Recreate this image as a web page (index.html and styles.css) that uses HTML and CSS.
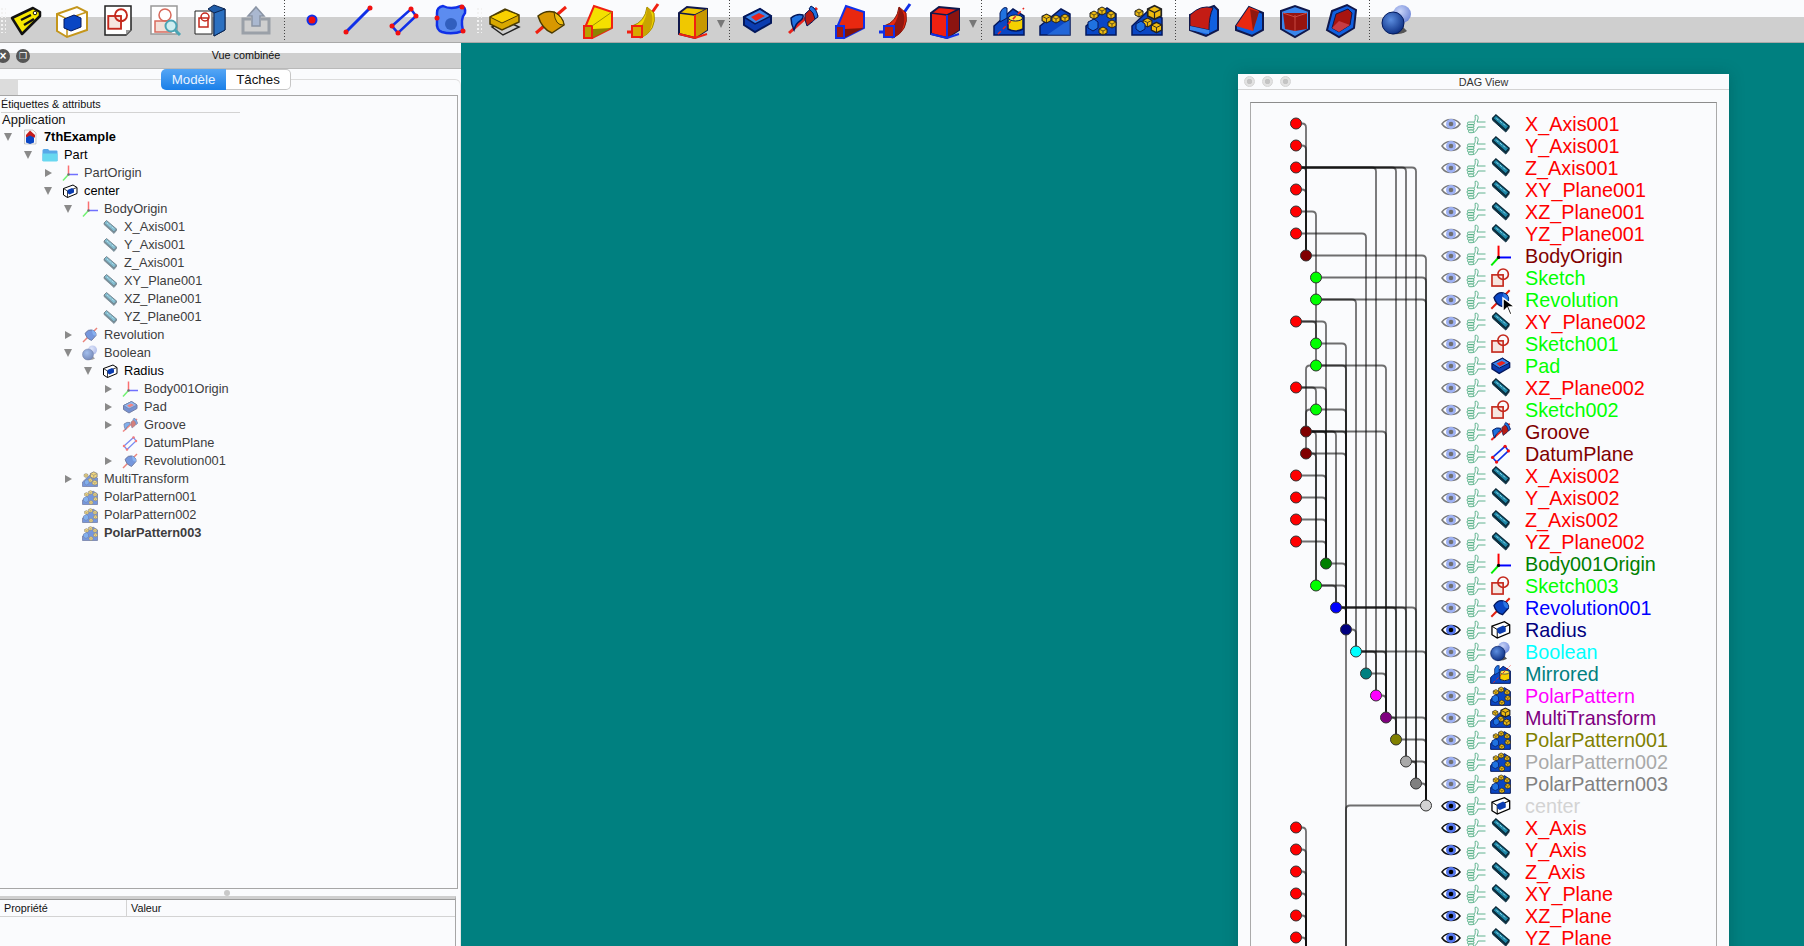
FILE: index.html
```html
<!DOCTYPE html>
<html lang="fr">

<head>
    <meta charset="UTF-8">
    <title>FreeCAD - DAG View</title>
    <link rel="stylesheet" href="styles.css">
</head>

<body>

    <!-- icons, used everywhere below -->
    <svg class="defs">
        <defs>
            <radialGradient id="ball" cx="40%" cy="35%" r="70%"><stop offset="0" stop-color="#5c8ee0"/><stop offset="1" stop-color="#0a2c80"/></radialGradient>
            <radialGradient id="ballb" cx="40%" cy="35%" r="70%"><stop offset="0" stop-color="#c8d4f8"/><stop offset="1" stop-color="#6f86d8"/></radialGradient>
            <symbol id="eye" viewBox="0 0 20 14"><path d="M1 7C5 1 15 1 19 7C15 13 5 13 1 7Z" fill="#fff" stroke="#111" stroke-width="1.5"/><circle cx="10" cy="7" r="5" fill="#5577ee"/><circle cx="10" cy="7" r="2.3" fill="#000"/></symbol>
            <symbol id="thumb" viewBox="0 0 20 20"><g fill="#eef8f2" stroke="#3aa274" stroke-width=".8"><path d="M8 8C10 6 9 3 9 1.5c2.500-1 3.500 1 3 3.500l-1 3h8.500" fill="none"/><path d="M19.500 13H12C11 16 9 18.500 7 18.500" fill="none"/><rect x="1.500" y="8" width="7" height="2.700" rx="1.300"/><rect x="1" y="10.700" width="7" height="2.700" rx="1.300"/><rect x="1.500" y="13.400" width="6.500" height="2.700" rx="1.300"/><rect x="2.500" y="16" width="5" height="2.700" rx="1.300"/></g></symbol>
            <symbol id="axis" viewBox="0 0 32 32"><path d="M4 8v3l20 18 5-6v-3z" fill="#0c3c50" stroke="#0b2a3a" stroke-width="1.500"/><path d="M4 8 9 3 29 20 24 26Z" fill="#1f88a8" stroke="#0b2a3a" stroke-width="2"/><path d="M10 8l3 3M15 12l3 3M20 16l3 3" stroke="#9fd8e8" stroke-width="1.500"/></symbol>
            <symbol id="origin" viewBox="0 0 32 32"><path d="M13 19V1" stroke="#f00" stroke-width="3"/><path d="M13 19H32" stroke="#00f" stroke-width="3"/><path d="M13 19 2 31" stroke="#0e0" stroke-width="3"/><circle cx="13" cy="19" r="2.500"/></symbol>
            <symbol id="sk" viewBox="0 0 32 32"><rect x="3" y="12" width="17" height="17" fill="#f6e6e0" stroke="#c4281c" stroke-width="2.500"/><circle cx="20" cy="11" r="8" fill="none" stroke="#c4281c" stroke-width="2.500"/></symbol>
            <symbol id="revb" viewBox="0 0 32 32"><path d="M2 30 30 2" stroke="#e02010" stroke-width="3"/><path d="M6 13Q12 4 20 6Q29 9 28 17L19 27Q9 24 6 13Z" fill="#0a46c4" stroke="#04185c" stroke-width="2"/><path d="M20 6Q29 9 28 17Q20 18 20 6Z" fill="#2c78e8"/></symbol>
            <symbol id="padb" viewBox="0 0 32 32"><path d="M3 13 19 5 30 12V19L14 28 3 21Z" fill="#0a3cb0" stroke="#04185c" stroke-width="2"/><path d="M3 13 19 5 30 12 14 20Z" fill="#3a86ec" stroke="#04185c" stroke-width="1.500"/><path d="M10 13 18 9 24 12 15 17Z" fill="#e8241c"/></symbol>
            <symbol id="groove" viewBox="0 0 32 32"><path d="M2 29 30 4" stroke="#e8241c" stroke-width="3"/><path d="M18 10Q22 6 26 3L31 12Q26 18 20 22Q17 15 18 10Z" fill="#b81c14" stroke="#04185c"/><path d="M4 14Q10 9 16 11Q17 14 13 17Q9 19 7 26Q4 20 4 14Z" fill="#1f72e0" stroke="#04185c" stroke-width="1.500"/><path d="M24 2Q30 5 31 13L28 15Q27 8 22 5Z" fill="#1f72e0" stroke="#04185c"/></symbol>
            <symbol id="plane" viewBox="0 0 32 32"><path d="M4 22 23 5 28 12 10 29Z" fill="none" stroke="#1030e8" stroke-width="2.500"/><g fill="#f01010"><circle cx="4" cy="22" r="2.500"/><circle cx="23" cy="5" r="2.500"/><circle cx="28" cy="12" r="2.500"/><circle cx="10" cy="29" r="2.500"/></g></symbol>
            <symbol id="body" viewBox="0 0 32 32"><path d="M3 11 22 4 30 9V21L11 29 3 24Z" fill="#fff" stroke="#000" stroke-width="2"/><path d="M3 11 11 16 30 9M11 16V29" fill="none" stroke="#000" stroke-width="1.500"/><path d="M11 14 20 10 24 13V19L15 23 11 20Z" fill="#0a3cb0"/></symbol>
            <symbol id="bool" viewBox="0 0 32 32"><circle cx="21" cy="10" r="9" fill="url(#ballb)"/><path d="M10 30Q20 31 26 27L20 21Z" fill="#555"/><circle cx="12" cy="19" r="11" fill="url(#ball)" stroke="#041c60"/></symbol>
            <symbol id="mirror" viewBox="0 0 32 32"><path d="M1 31V22L20 5 31 12V31Z" fill="#0a46c4" stroke="#04185c" stroke-width="1.500"/><path d="M7 18V9Q10 2 14 4V14Z" fill="#1f72e0" stroke="#04185c"/><path d="M15 14Q22 10 30 14V25Q22 29 15 25Z" fill="#f5d000" stroke="#04185c" stroke-width="1.500"/><ellipse cx="22.500" cy="14" rx="7" ry="3" fill="#ffe84a" stroke="#04185c"/><path d="M5 30 31 4" stroke="#e8241c" stroke-width="1.500" stroke-dasharray="4 3"/></symbol>
            <symbol id="cube" viewBox="0 0 10 10"><path d="M1 3 5 1 9 3V7L5 9 1 7Z" fill="#eebb10" stroke="#222"/><path d="M1 3 5 5 9 3M5 5V9" fill="none" stroke="#222" stroke-width=".7"/></symbol>
            <symbol id="linear" viewBox="0 0 32 32"><path d="M1 31V22L22 5 31 10V31Z" fill="#0a46c4" stroke="#04185c" stroke-width="1.500"/><path d="M8 31 31 15V31Z" fill="#3a86ec" opacity=".5"/><use href="#cube" x="2" y="9" width="11" height="11"/><use href="#cube" x="12" y="10" width="10" height="10"/><use href="#cube" x="21" y="9" width="10" height="10"/></symbol>
            <symbol id="polar" viewBox="0 0 32 32"><path d="M1 31V22L22 4 31 10V31Z" fill="#0a46c4" stroke="#04185c" stroke-width="1.500"/><use href="#cube" x="4" y="6" width="10" height="10"/><use href="#cube" x="12" y="2" width="10" height="10"/><use href="#cube" x="21" y="6" width="10" height="10"/><use href="#cube" x="22" y="15" width="10" height="10"/><use href="#cube" x="13" y="22" width="10" height="10"/><path d="M3 18 9 15 13 18V24L8 27 3 24Z" fill="#1f72e0" stroke="#04185c"/></symbol>
            <symbol id="multi" viewBox="0 0 32 32"><path d="M1 31V22L18 6 31 14V31Z" fill="#0a46c4" stroke="#04185c" stroke-width="1.500"/><use href="#cube" x="3" y="4" width="10" height="10"/><use href="#cube" x="15" y="0" width="17" height="17"/><use href="#cube" x="11" y="13" width="11" height="11"/><use href="#cube" x="19" y="17" width="13" height="13"/><path d="M5 20 10 17 14 20V25L9 28 5 25Z" fill="#1f72e0" stroke="#04185c"/></symbol>
            <symbol id="doc" viewBox="0 0 32 32"><path d="M5 2H22L28 8V30H5Z" fill="#f8f8f8" stroke="#999"/><path d="M16 3 26 12V17H8V12Z" fill="#c41c1c"/><path d="M8 17 16 13 24 17V27L16 30 8 27Z" fill="#0a46c4"/></symbol>
            <symbol id="folder" viewBox="0 0 32 32"><path d="M1 7Q1 4 4 4H12L15 7H29Q31 7 31 9V28H1Z" fill="#58a8e8"/><path d="M1 13H31V27Q31 29 29 29H3Q1 29 1 27Z" fill="#68d8f0"/></symbol>
            <symbol id="t-tag" viewBox="0 0 32 32"><path d="M2 14 23 4 30 8V12L12 30Z" fill="#f7e800" stroke="#111" stroke-width="2.500" stroke-linejoin="round"/><path d="M11 16 21 11M14 21 24 15" stroke="#111" stroke-width="2.500"/><circle cx="25" cy="9" r="1.800" fill="#fff" stroke="#111"/></symbol>
            <symbol id="t-part" viewBox="0 0 32 32"><path d="M1 10 21 3 31 8V26L11 33 1 27Z" fill="#fff" stroke="#c4961c" stroke-width="2"/><path d="M1 10 11 15 31 8M11 15V33" fill="none" stroke="#c4961c" stroke-width="1.500"/><path d="M8 15 18 11 25 14V23L15 27 8 24Z" fill="#0a46c4" stroke="#04185c"/></symbol>
            <symbol id="t-sketch" viewBox="0 0 32 32"><path d="M3 2H29V26L24 31H3Z" fill="#fff" stroke="#222" stroke-width="1.500"/><path d="M24 31V26H29Z" fill="#999"/><use href="#sk" x="4" y="3" width="24" height="24"/></symbol>
            <symbol id="t-edit" viewBox="0 0 32 32"><path d="M3 2H29V30H3Z" fill="#fff" stroke="#999" stroke-width="1.500"/><rect x="7" y="17" width="16" height="11" fill="#f2e0d8" stroke="#d86a5c" stroke-width="1.500"/><circle cx="17" cy="11" r="6" fill="none" stroke="#d86a5c" stroke-width="1.500"/><circle cx="23" cy="22" r="5.500" fill="#cfeef0" stroke="#4aa4b4" stroke-width="2"/><path d="M27 26 32 31" stroke="#4aa4b4" stroke-width="3"/></symbol>
            <symbol id="t-map" viewBox="0 0 32 32"><path d="M1 7H18V30H1Z" fill="#fff" stroke="#222"/><rect x="5" y="14" width="9" height="9" fill="none" stroke="#c4281c" stroke-width="1.500"/><circle cx="11" cy="13" r="4" fill="none" stroke="#c4281c" stroke-width="1.500"/><path d="M14 5 20 1 31 5V26L20 32V9Z" fill="#1f5ca8" stroke="#0a2450"/><path d="M20 9V32L31 26V5Z" fill="#2c70c0" stroke="#0a2450"/></symbol>
            <symbol id="t-export" viewBox="0 0 32 32"><path d="M11 15H3V29H29V15H21" fill="none" stroke="#9aa0a8" stroke-width="3"/><path d="M16 3 24 12H20V22H12V12H8Z" fill="#aab8d0" stroke="#8a94a4" stroke-width="1.500"/></symbol>
            <symbol id="t-point" viewBox="0 0 32 32"><circle cx="16" cy="16" r="4.500" fill="#f01010" stroke="#1030e8" stroke-width="2"/></symbol>
            <symbol id="t-line" viewBox="0 0 32 32"><path d="M4 28 28 4" stroke="#1030e8" stroke-width="3"/><circle cx="4" cy="28" r="2.500" fill="#f01010"/><circle cx="28" cy="4" r="2.500" fill="#f01010"/></symbol>
            <symbol id="t-shape" viewBox="0 0 32 32"><path d="M3 9Q3 3 9 2Q17 6 27 2Q32 3 31 9Q26 15 29 27Q18 31 8 28Q2 26 3 18Z" fill="#5c8cf0" stroke="#1030e8" stroke-width="2.500"/><circle cx="17" cy="20" r="6" fill="#1f4ca8" opacity=".7"/><g fill="#f01010"><circle cx="3" cy="14" r="2.500"/><circle cx="28" cy="3" r="2.500"/><circle cx="29" cy="27" r="2.500"/></g></symbol>
            <symbol id="t-pad" viewBox="0 0 32 32"><path d="M3 23 17 17 30 23 14 31Z" fill="none" stroke="#222" stroke-width="1.500"/><path d="M1 13V20L13 26 30 18V11L16 5Z" fill="#d8a800" stroke="#4a3a00" stroke-width="1.500"/><path d="M1 13 17 6 30 11 13 19Z" fill="#f8d000" stroke="#4a3a00"/></symbol>
            <symbol id="t-rev" viewBox="0 0 32 32"><path d="M1 29 31 3" stroke="#f02010" stroke-width="3"/><path d="M3 12Q10 6 19 8Q28 13 29 21L17 29Q7 25 3 12Z" fill="#d89800" stroke="#4a3a00" stroke-width="1.500"/><path d="M19 8Q28 13 29 21Q20 22 19 8Z" fill="#f0c010" stroke="#4a3a00"/></symbol>
            <symbol id="t-loft" viewBox="0 0 32 32"><path d="M3 26 13 2 31 8V24L11 34Z" fill="#f4e000" stroke="#f02010" stroke-width="2"/><path d="M12 25 31 24 11 34Z" fill="#8c8400"/><path d="M3 22H11V34H3Z" fill="#b8a000" stroke="#f02010" stroke-width="2"/><path d="M11 22 31 8" stroke="#a09000"/></symbol>
            <symbol id="t-pipe" viewBox="0 0 32 32"><path d="M31 0 24 10" stroke="#f02010" stroke-width="3"/><path d="M5 22Q18 18 20 3L27 9Q30 26 14 34L5 32Z" fill="#f4d800" stroke="#a08800"/><path d="M14 22Q20 14 20 3 30 12 22 28 18 32 14 34Z" fill="#c8a400"/><path d="M5 22H15V33H5Z" fill="#d8a800" stroke="#f02010" stroke-width="2"/><path d="M0 28H5" stroke="#f02010" stroke-width="3"/></symbol>
            <symbol id="t-box" viewBox="0 0 32 32"><path d="M2 9 10 3 30 5V26L18 34 2 30Z" fill="#f0c800" stroke="#10184c" stroke-width="2"/><path d="M2 9 18 11V34M18 11 30 5" fill="none" stroke="#10184c" stroke-width="1.500"/><path d="M18 11 30 5V26L18 34Z" fill="#c89800"/><path d="M2 30 18 34 30 30" fill="none" stroke="#f02010" stroke-width="2"/><path d="M18 11V34" stroke="#f02010" stroke-width="2"/></symbol>
            <symbol id="t-loftr" viewBox="0 0 32 32"><path d="M3 26 13 2 31 8V24L11 34Z" fill="#e82810" stroke="#1030e8" stroke-width="2"/><path d="M12 25 31 24 11 34Z" fill="#801408"/><path d="M3 22H11V34H3Z" fill="#a01c10" stroke="#1030e8" stroke-width="2"/></symbol>
            <symbol id="t-piper" viewBox="0 0 32 32"><path d="M31 0 24 10" stroke="#1030e8" stroke-width="3"/><path d="M5 22Q18 18 20 3L27 9Q30 26 14 34L5 32Z" fill="#e82810" stroke="#801408"/><path d="M14 22Q20 14 20 3 30 12 22 28 18 32 14 34Z" fill="#901810"/><path d="M5 22H15V33H5Z" fill="#b82010" stroke="#1030e8" stroke-width="2"/><path d="M0 28H5" stroke="#1030e8" stroke-width="3"/></symbol>
            <symbol id="t-boxr" viewBox="0 0 32 32"><path d="M2 9 10 3 30 5V26L18 34 2 30Z" fill="#f02010" stroke="#10184c" stroke-width="2"/><path d="M18 11 30 5V26L18 34Z" fill="#8c1410"/><path d="M2 9 18 11 30 5" fill="none" stroke="#10184c" stroke-width="1.500"/><path d="M2 30 18 34 30 30M18 11V34" fill="none" stroke="#1030e8" stroke-width="2"/></symbol>
            <symbol id="t-fillet" viewBox="0 0 32 32"><path d="M3 11 27 2 31 6V26L19 32 3 26Z" fill="#1060e0" stroke="#10184c" stroke-width="2"/><path d="M3 11Q14 0 26 4 22 12 22 26L3 22Z" fill="#c41c14" stroke="#10184c"/><path d="M3 22 22 26V30L3 26Z" fill="#3a86ec"/></symbol>
            <symbol id="t-chamfer" viewBox="0 0 32 32"><path d="M3 22 16 3 30 9V26L19 32 3 26Z" fill="#1060e0" stroke="#10184c" stroke-width="2"/><path d="M3 22 16 3 26 7 20 27Z" fill="#e82810"/><path d="M17 5 26 8 20 27Z" fill="#901810"/></symbol>
            <symbol id="t-draft" viewBox="0 0 32 32"><path d="M2 7 16 2 30 7V25L16 33 2 25Z" fill="#3a86ec" stroke="#10184c" stroke-width="2"/><path d="M4 9H28V25L16 27 6 25Z" fill="#961410"/><path d="M16 11V27M4 9 16 13 28 9" fill="none" stroke="#c84840"/></symbol>
            <symbol id="t-thick" viewBox="0 0 32 32"><path d="M7 7 22 1 31 6 29 24 14 33 2 26Z" fill="#1060e0" stroke="#10184c" stroke-width="2"/><path d="M11 10 23 5 27 9 25 21 14 28 7 24Z" fill="#a81410" stroke="#10184c"/><path d="M14 17 25 21 14 28 7 24Z" fill="#c83c44"/></symbol>
        </defs>
    </svg>

    <div class="toolbar">
        <div class="grip grip-first"></div>
        <div class="tool"><svg><use href="#t-tag"/></svg></div>
        <div class="tool"><svg><use href="#t-part"/></svg></div>
        <div class="tool"><svg><use href="#t-sketch"/></svg></div>
        <div class="tool"><svg><use href="#t-edit"/></svg></div>
        <div class="tool"><svg><use href="#t-map"/></svg></div>
        <div class="tool"><svg><use href="#t-export"/></svg></div>
        <div class="sep"></div>
        <div class="tool"><svg><use href="#t-point"/></svg></div>
        <div class="tool"><svg><use href="#t-line"/></svg></div>
        <div class="tool"><svg><use href="#plane"/></svg></div>
        <div class="tool"><svg><use href="#t-shape"/></svg></div>
        <div class="gap"><div class="grip"></div></div>
        <div class="tool"><svg><use href="#t-pad"/></svg></div>
        <div class="tool"><svg><use href="#t-rev"/></svg></div>
        <div class="tool"><svg><use href="#t-loft"/></svg></div>
        <div class="tool"><svg><use href="#t-pipe"/></svg></div>
        <div class="tool tool-drop"><svg><use href="#t-box"/></svg><i class="drop"></i></div>
        <div class="sep"></div>
        <div class="tool"><svg><use href="#padb"/></svg></div>
        <div class="tool"><svg><use href="#groove"/></svg></div>
        <div class="tool"><svg><use href="#t-loftr"/></svg></div>
        <div class="tool"><svg><use href="#t-piper"/></svg></div>
        <div class="tool tool-drop"><svg><use href="#t-boxr"/></svg><i class="drop"></i></div>
        <div class="sep"></div>
        <div class="tool"><svg><use href="#mirror"/></svg></div>
        <div class="tool"><svg><use href="#linear"/></svg></div>
        <div class="tool"><svg><use href="#polar"/></svg></div>
        <div class="tool"><svg><use href="#multi"/></svg></div>
        <div class="sep"></div>
        <div class="tool"><svg><use href="#t-fillet"/></svg></div>
        <div class="tool"><svg><use href="#t-chamfer"/></svg></div>
        <div class="tool"><svg><use href="#t-draft"/></svg></div>
        <div class="tool"><svg><use href="#t-thick"/></svg></div>
        <div class="sep"></div>
        <div class="tool"><svg><use href="#bool"/></svg></div>
    </div>

    <div class="main">
        <div class="side">
            <div class="dock-title">
                <span class="dock-btn dock-close">×</span>
                <span class="dock-btn dock-float">❐</span>
                Vue combinée
            </div>
            <div class="tabs">
                <div class="tab tab-on">Modèle</div>
                <div class="tab">Tâches</div>
            </div>
            <div class="pane">
                <div class="pane-corner"></div>
                <div class="tree">
                    <div class="tree-head"><span>Étiquettes &amp; attributs</span></div>
                    <div class="tree-app">Application</div>
                    <div class="node d0 strong bold"><i class="ar down"></i><svg><use href="#doc"/></svg><span>7thExample</span></div>
                    <div class="node d1 strong"><i class="ar down"></i><svg><use href="#folder"/></svg><span>Part</span></div>
                    <div class="node d2 dim"><i class="ar right"></i><svg><use href="#origin"/></svg><span>PartOrigin</span></div>
                    <div class="node d2 strong"><i class="ar down"></i><svg><use href="#body"/></svg><span>center</span></div>
                    <div class="node d3 dim"><i class="ar down"></i><svg><use href="#origin"/></svg><span>BodyOrigin</span></div>
                    <div class="node d4 dim"><i class="ar"></i><svg><use href="#axis"/></svg><span>X_Axis001</span></div>
                    <div class="node d4 dim"><i class="ar"></i><svg><use href="#axis"/></svg><span>Y_Axis001</span></div>
                    <div class="node d4 dim"><i class="ar"></i><svg><use href="#axis"/></svg><span>Z_Axis001</span></div>
                    <div class="node d4 dim"><i class="ar"></i><svg><use href="#axis"/></svg><span>XY_Plane001</span></div>
                    <div class="node d4 dim"><i class="ar"></i><svg><use href="#axis"/></svg><span>XZ_Plane001</span></div>
                    <div class="node d4 dim"><i class="ar"></i><svg><use href="#axis"/></svg><span>YZ_Plane001</span></div>
                    <div class="node d3 dim"><i class="ar right"></i><svg><use href="#revb"/></svg><span>Revolution</span></div>
                    <div class="node d3 dim"><i class="ar down"></i><svg><use href="#bool"/></svg><span>Boolean</span></div>
                    <div class="node d4 strong"><i class="ar down"></i><svg><use href="#body"/></svg><span>Radius</span></div>
                    <div class="node d5 dim"><i class="ar right"></i><svg><use href="#origin"/></svg><span>Body001Origin</span></div>
                    <div class="node d5 dim"><i class="ar right"></i><svg><use href="#padb"/></svg><span>Pad</span></div>
                    <div class="node d5 dim"><i class="ar right"></i><svg><use href="#groove"/></svg><span>Groove</span></div>
                    <div class="node d5 dim"><i class="ar"></i><svg><use href="#plane"/></svg><span>DatumPlane</span></div>
                    <div class="node d5 dim"><i class="ar right"></i><svg><use href="#revb"/></svg><span>Revolution001</span></div>
                    <div class="node d3 dim"><i class="ar right"></i><svg><use href="#multi"/></svg><span>MultiTransform</span></div>
                    <div class="node d3 dim"><i class="ar"></i><svg><use href="#polar"/></svg><span>PolarPattern001</span></div>
                    <div class="node d3 dim"><i class="ar"></i><svg><use href="#polar"/></svg><span>PolarPattern002</span></div>
                    <div class="node d3 dim bold"><i class="ar"></i><svg><use href="#polar"/></svg><span>PolarPattern003</span></div>
                </div>
                <div class="split"><i></i></div>
                <div class="props">
                    <div class="props-head">
                        <div class="prop-col">Propriété</div>
                        <div class="val-col">Valeur</div>
                    </div>
                </div>
            </div>
        </div>

        <div class="mdi">
            <div class="dag-win">
                <div class="dag-title">
                    <i class="light"></i><i class="light"></i><i class="light"></i>
                    <span>DAG View</span>
                </div>
                <div class="dag-box">
                    <svg class="graph" viewBox="1251 103 190 843">
                        <g class="edges">
                            <path d="M1296 123.5H1302q4 0 4 4V255.5"/>
                            <path d="M1296 145.5H1302q4 0 4 4V255.5"/>
                            <path d="M1296 167.5H1302q4 0 4 4V255.5"/>
                            <path d="M1296 189.5H1302q4 0 4 4V255.5"/>
                            <path d="M1296 211.5H1312q4 0 4 4V277.5"/>
                            <path d="M1296 233.5H1362q4 0 4 4V673.5"/>
                            <path d="M1296 167.5H1372q4 0 4 4V695.5"/>
                            <path d="M1296 167.5H1392q4 0 4 4V739.5"/>
                            <path d="M1296 167.5H1402q4 0 4 4V761.5"/>
                            <path d="M1296 167.5H1412q4 0 4 4V783.5"/>
                            <path d="M1306 255.5H1422q4 0 4 4V805.5"/>
                            <path d="M1316 277.5V299.5"/>
                            <path d="M1316 277.5H1422q4 0 4 4V805.5"/>
                            <path d="M1316 299.5H1352q4 0 4 4V651.5"/>
                            <path d="M1316 299.5H1422q4 0 4 4V805.5"/>
                            <path d="M1316 299.5V343.5"/>
                            <path d="M1296 321.5H1312q4 0 4 4V343.5"/>
                            <path d="M1296 321.5H1322q4 0 4 4V563.5"/>
                            <path d="M1316 343.5H1342q4 0 4 4V629.5"/>
                            <path d="M1316 343.5V365.5"/>
                            <path d="M1316 365.5H1342q4 0 4 4V629.5"/>
                            <path d="M1316 365.5H1382q4 0 4 4V717.5"/>
                            <path d="M1316 365.5H1310q-4 0-4 4V431.5"/>
                            <path d="M1296 387.5H1312q4 0 4 4V409.5"/>
                            <path d="M1296 387.5H1322q4 0 4 4V563.5"/>
                            <path d="M1316 409.5H1342q4 0 4 4V629.5"/>
                            <path d="M1316 409.5H1310q-4 0-4 4V431.5"/>
                            <path d="M1306 431.5H1382q4 0 4 4V717.5"/>
                            <path d="M1306 431.5H1312q4 0 4 4V585.5"/>
                            <path d="M1306 431.5H1322q4 0 4 4V563.5"/>
                            <path d="M1306 431.5H1332q4 0 4 4V607.5"/>
                            <path d="M1306 431.5H1342q4 0 4 4V629.5"/>
                            <path d="M1306 431.5V453.5"/>
                            <path d="M1306 453.5H1342q4 0 4 4V629.5"/>
                            <path d="M1306 453.5H1312q4 0 4 4V585.5"/>
                            <path d="M1296 475.5H1322q4 0 4 4V563.5"/>
                            <path d="M1296 497.5H1322q4 0 4 4V563.5"/>
                            <path d="M1296 519.5H1322q4 0 4 4V563.5"/>
                            <path d="M1296 541.5H1322q4 0 4 4V563.5"/>
                            <path d="M1326 563.5H1342q4 0 4 4V629.5"/>
                            <path d="M1316 585.5H1332q4 0 4 4V607.5"/>
                            <path d="M1316 585.5H1342q4 0 4 4V629.5"/>
                            <path d="M1336 607.5H1342q4 0 4 4V629.5"/>
                            <path d="M1336 607.5H1392q4 0 4 4V739.5"/>
                            <path d="M1336 607.5H1402q4 0 4 4V761.5"/>
                            <path d="M1336 607.5H1412q4 0 4 4V783.5"/>
                            <path d="M1346 629.5H1352q4 0 4 4V651.5"/>
                            <path d="M1346 629.5V946"/>
                            <path d="M1356 651.5H1372q4 0 4 4V695.5"/>
                            <path d="M1356 651.5H1382q4 0 4 4V717.5"/>
                            <path d="M1356 651.5H1422q4 0 4 4V805.5"/>
                            <path d="M1366 673.5H1382q4 0 4 4V717.5"/>
                            <path d="M1376 695.5H1382q4 0 4 4V717.5"/>
                            <path d="M1386 717.5H1392q4 0 4 4V739.5"/>
                            <path d="M1386 717.5H1422q4 0 4 4V805.5"/>
                            <path d="M1396 739.5H1422q4 0 4 4V805.5"/>
                            <path d="M1406 761.5H1412q4 0 4 4V783.5"/>
                            <path d="M1406 761.5H1422q4 0 4 4V805.5"/>
                            <path d="M1416 783.5H1422q4 0 4 4V805.5"/>
                            <path d="M1426 805.5H1350q-4 0-4 4V946"/>
                            <path d="M1296 827.5H1302q4 0 4 4V946"/>
                            <path d="M1296 849.5H1302q4 0 4 4V946"/>
                            <path d="M1296 871.5H1302q4 0 4 4V946"/>
                            <path d="M1296 893.5H1302q4 0 4 4V946"/>
                            <path d="M1296 915.5H1302q4 0 4 4V946"/>
                            <path d="M1296 937.5H1302q4 0 4 4V946"/>
                        </g>
                        <g class="dots">
                            <circle class="red" cx="1296" cy="123.5" r="5.5"/>
                            <circle class="red" cx="1296" cy="145.5" r="5.5"/>
                            <circle class="red" cx="1296" cy="167.5" r="5.5"/>
                            <circle class="red" cx="1296" cy="189.5" r="5.5"/>
                            <circle class="red" cx="1296" cy="211.5" r="5.5"/>
                            <circle class="red" cx="1296" cy="233.5" r="5.5"/>
                            <circle class="maroon" cx="1306" cy="255.5" r="5.5"/>
                            <circle class="lime" cx="1316" cy="277.5" r="5.5"/>
                            <circle class="lime" cx="1316" cy="299.5" r="5.5"/>
                            <circle class="red" cx="1296" cy="321.5" r="5.5"/>
                            <circle class="lime" cx="1316" cy="343.5" r="5.5"/>
                            <circle class="lime" cx="1316" cy="365.5" r="5.5"/>
                            <circle class="red" cx="1296" cy="387.5" r="5.5"/>
                            <circle class="lime" cx="1316" cy="409.5" r="5.5"/>
                            <circle class="maroon" cx="1306" cy="431.5" r="5.5"/>
                            <circle class="maroon" cx="1306" cy="453.5" r="5.5"/>
                            <circle class="red" cx="1296" cy="475.5" r="5.5"/>
                            <circle class="red" cx="1296" cy="497.5" r="5.5"/>
                            <circle class="red" cx="1296" cy="519.5" r="5.5"/>
                            <circle class="red" cx="1296" cy="541.5" r="5.5"/>
                            <circle class="green" cx="1326" cy="563.5" r="5.5"/>
                            <circle class="lime" cx="1316" cy="585.5" r="5.5"/>
                            <circle class="blue" cx="1336" cy="607.5" r="5.5"/>
                            <circle class="navy" cx="1346" cy="629.5" r="5.5"/>
                            <circle class="cyan" cx="1356" cy="651.5" r="5.5"/>
                            <circle class="teal" cx="1366" cy="673.5" r="5.5"/>
                            <circle class="magenta" cx="1376" cy="695.5" r="5.5"/>
                            <circle class="purple" cx="1386" cy="717.5" r="5.5"/>
                            <circle class="olive" cx="1396" cy="739.5" r="5.5"/>
                            <circle class="silver" cx="1406" cy="761.5" r="5.5"/>
                            <circle class="gray" cx="1416" cy="783.5" r="5.5"/>
                            <circle class="pale" cx="1426" cy="805.5" r="5.5"/>
                            <circle class="red" cx="1296" cy="827.5" r="5.5"/>
                            <circle class="red" cx="1296" cy="849.5" r="5.5"/>
                            <circle class="red" cx="1296" cy="871.5" r="5.5"/>
                            <circle class="red" cx="1296" cy="893.5" r="5.5"/>
                            <circle class="red" cx="1296" cy="915.5" r="5.5"/>
                            <circle class="red" cx="1296" cy="937.5" r="5.5"/>
                        </g>
                    </svg>
                    <div class="rows">
                        <div class="row red"><svg class="eye off"><use href="#eye"/></svg><svg class="thumb"><use href="#thumb"/></svg><svg class="ico"><use href="#axis"/></svg><span>X_Axis001</span></div>
                        <div class="row red"><svg class="eye off"><use href="#eye"/></svg><svg class="thumb"><use href="#thumb"/></svg><svg class="ico"><use href="#axis"/></svg><span>Y_Axis001</span></div>
                        <div class="row red"><svg class="eye off"><use href="#eye"/></svg><svg class="thumb"><use href="#thumb"/></svg><svg class="ico"><use href="#axis"/></svg><span>Z_Axis001</span></div>
                        <div class="row red"><svg class="eye off"><use href="#eye"/></svg><svg class="thumb"><use href="#thumb"/></svg><svg class="ico"><use href="#axis"/></svg><span>XY_Plane001</span></div>
                        <div class="row red"><svg class="eye off"><use href="#eye"/></svg><svg class="thumb"><use href="#thumb"/></svg><svg class="ico"><use href="#axis"/></svg><span>XZ_Plane001</span></div>
                        <div class="row red"><svg class="eye off"><use href="#eye"/></svg><svg class="thumb"><use href="#thumb"/></svg><svg class="ico"><use href="#axis"/></svg><span>YZ_Plane001</span></div>
                        <div class="row maroon"><svg class="eye off"><use href="#eye"/></svg><svg class="thumb"><use href="#thumb"/></svg><svg class="ico"><use href="#origin"/></svg><span>BodyOrigin</span></div>
                        <div class="row lime"><svg class="eye off"><use href="#eye"/></svg><svg class="thumb"><use href="#thumb"/></svg><svg class="ico"><use href="#sk"/></svg><span>Sketch</span></div>
                        <div class="row lime"><svg class="eye off"><use href="#eye"/></svg><svg class="thumb"><use href="#thumb"/></svg><svg class="ico"><use href="#revb"/><path class="cursor" d="M13 9 13 23 17 19 20 26 22 25 19 18 25 18Z"/></svg><span>Revolution</span></div>
                        <div class="row red"><svg class="eye off"><use href="#eye"/></svg><svg class="thumb"><use href="#thumb"/></svg><svg class="ico"><use href="#axis"/></svg><span>XY_Plane002</span></div>
                        <div class="row lime"><svg class="eye off"><use href="#eye"/></svg><svg class="thumb"><use href="#thumb"/></svg><svg class="ico"><use href="#sk"/></svg><span>Sketch001</span></div>
                        <div class="row lime"><svg class="eye off"><use href="#eye"/></svg><svg class="thumb"><use href="#thumb"/></svg><svg class="ico"><use href="#padb"/></svg><span>Pad</span></div>
                        <div class="row red"><svg class="eye off"><use href="#eye"/></svg><svg class="thumb"><use href="#thumb"/></svg><svg class="ico"><use href="#axis"/></svg><span>XZ_Plane002</span></div>
                        <div class="row lime"><svg class="eye off"><use href="#eye"/></svg><svg class="thumb"><use href="#thumb"/></svg><svg class="ico"><use href="#sk"/></svg><span>Sketch002</span></div>
                        <div class="row maroon"><svg class="eye off"><use href="#eye"/></svg><svg class="thumb"><use href="#thumb"/></svg><svg class="ico"><use href="#groove"/></svg><span>Groove</span></div>
                        <div class="row maroon"><svg class="eye off"><use href="#eye"/></svg><svg class="thumb"><use href="#thumb"/></svg><svg class="ico"><use href="#plane"/></svg><span>DatumPlane</span></div>
                        <div class="row red"><svg class="eye off"><use href="#eye"/></svg><svg class="thumb"><use href="#thumb"/></svg><svg class="ico"><use href="#axis"/></svg><span>X_Axis002</span></div>
                        <div class="row red"><svg class="eye off"><use href="#eye"/></svg><svg class="thumb"><use href="#thumb"/></svg><svg class="ico"><use href="#axis"/></svg><span>Y_Axis002</span></div>
                        <div class="row red"><svg class="eye off"><use href="#eye"/></svg><svg class="thumb"><use href="#thumb"/></svg><svg class="ico"><use href="#axis"/></svg><span>Z_Axis002</span></div>
                        <div class="row red"><svg class="eye off"><use href="#eye"/></svg><svg class="thumb"><use href="#thumb"/></svg><svg class="ico"><use href="#axis"/></svg><span>YZ_Plane002</span></div>
                        <div class="row green"><svg class="eye off"><use href="#eye"/></svg><svg class="thumb"><use href="#thumb"/></svg><svg class="ico"><use href="#origin"/></svg><span>Body001Origin</span></div>
                        <div class="row lime"><svg class="eye off"><use href="#eye"/></svg><svg class="thumb"><use href="#thumb"/></svg><svg class="ico"><use href="#sk"/></svg><span>Sketch003</span></div>
                        <div class="row blue"><svg class="eye off"><use href="#eye"/></svg><svg class="thumb"><use href="#thumb"/></svg><svg class="ico"><use href="#revb"/></svg><span>Revolution001</span></div>
                        <div class="row navy"><svg class="eye"><use href="#eye"/></svg><svg class="thumb"><use href="#thumb"/></svg><svg class="ico"><use href="#body"/></svg><span>Radius</span></div>
                        <div class="row cyan"><svg class="eye off"><use href="#eye"/></svg><svg class="thumb"><use href="#thumb"/></svg><svg class="ico"><use href="#bool"/></svg><span>Boolean</span></div>
                        <div class="row teal"><svg class="eye off"><use href="#eye"/></svg><svg class="thumb"><use href="#thumb"/></svg><svg class="ico"><use href="#mirror"/></svg><span>Mirrored</span></div>
                        <div class="row magenta"><svg class="eye off"><use href="#eye"/></svg><svg class="thumb"><use href="#thumb"/></svg><svg class="ico"><use href="#polar"/></svg><span>PolarPattern</span></div>
                        <div class="row purple"><svg class="eye off"><use href="#eye"/></svg><svg class="thumb"><use href="#thumb"/></svg><svg class="ico"><use href="#multi"/></svg><span>MultiTransform</span></div>
                        <div class="row olive"><svg class="eye off"><use href="#eye"/></svg><svg class="thumb"><use href="#thumb"/></svg><svg class="ico"><use href="#polar"/></svg><span>PolarPattern001</span></div>
                        <div class="row silver"><svg class="eye off"><use href="#eye"/></svg><svg class="thumb"><use href="#thumb"/></svg><svg class="ico"><use href="#polar"/></svg><span>PolarPattern002</span></div>
                        <div class="row gray"><svg class="eye off"><use href="#eye"/></svg><svg class="thumb"><use href="#thumb"/></svg><svg class="ico"><use href="#polar"/></svg><span>PolarPattern003</span></div>
                        <div class="row pale"><svg class="eye"><use href="#eye"/></svg><svg class="thumb"><use href="#thumb"/></svg><svg class="ico"><use href="#body"/></svg><span>center</span></div>
                        <div class="row red"><svg class="eye"><use href="#eye"/></svg><svg class="thumb"><use href="#thumb"/></svg><svg class="ico"><use href="#axis"/></svg><span>X_Axis</span></div>
                        <div class="row red"><svg class="eye"><use href="#eye"/></svg><svg class="thumb"><use href="#thumb"/></svg><svg class="ico"><use href="#axis"/></svg><span>Y_Axis</span></div>
                        <div class="row red"><svg class="eye"><use href="#eye"/></svg><svg class="thumb"><use href="#thumb"/></svg><svg class="ico"><use href="#axis"/></svg><span>Z_Axis</span></div>
                        <div class="row red"><svg class="eye"><use href="#eye"/></svg><svg class="thumb"><use href="#thumb"/></svg><svg class="ico"><use href="#axis"/></svg><span>XY_Plane</span></div>
                        <div class="row red"><svg class="eye"><use href="#eye"/></svg><svg class="thumb"><use href="#thumb"/></svg><svg class="ico"><use href="#axis"/></svg><span>XZ_Plane</span></div>
                        <div class="row red"><svg class="eye"><use href="#eye"/></svg><svg class="thumb"><use href="#thumb"/></svg><svg class="ico"><use href="#axis"/></svg><span>YZ_Plane</span></div>
                    </div>
                </div>
            </div>
        </div>
    </div>

</body>

</html>
```

FILE: styles.css
```css
*{
    box-sizing: border-box;
}

html, body{
    margin: 0;
    height: 946px;
    overflow: hidden;
}

body{
    display: flex;
    flex-direction: column;
    background-color: #008080;
    font-family: "Liberation Sans", Arial, sans-serif;
    color: #111;
}

.defs{
    position: absolute;
    width: 0;
    height: 0;
}

symbol{
    overflow: visible;
}

/* top toolbar */
.toolbar{
    display: flex;
    flex: none;
    height: 43px;
    padding-left: 3px;
    background: linear-gradient(#fafbfd 17px, #cfcfcf 17px);
    border-bottom: 1px solid #a9a9a9;
    position: relative;
}

.tool{
    display: flex;
    align-items: center;
    justify-content: center;
    width: 46px;
    padding-bottom: 2px;
}

.tool svg{
    width: 32px;
    height: 32px;
    overflow: visible;
}

.tool-drop{
    width: 58px;
    justify-content: flex-start;
    padding-left: 11px;
}

.drop{
    margin: 8px 0 0 8px;
    border-top: 8px solid #777;
    border-left: 4px solid transparent;
    border-right: 4px solid transparent;
}

.sep{
    width: 10px;
    display: flex;
    justify-content: center;
}

.sep::before{
    content: "";
    width: 1px;
    background: repeating-linear-gradient(#444 0 1px, transparent 1px 3px);
}

.gap{
    width: 9px;
    display: flex;
    justify-content: flex-end;
}

.grip{
    width: 6px;
    height: 26px;
    margin-top: 7px;
    background: radial-gradient(#f2f2f2 1px, transparent 1.3px) 0 0 / 4px 4px;
}

.grip-first{
    position: absolute;
    left: 0;
    top: 0;
}

/* left dock */
.main{
    display: flex;
    flex: 1;
    min-height: 0;
}

.side{
    width: 461px;
    flex: none;
    display: flex;
    flex-direction: column;
    background-color: #fafbfd;
}

.dock-title{
    position: relative;
    margin-top: 10px;
    height: 16px;
    background-color: #cfcfcf;
    border-bottom: 1px solid #b9b9b9;
    font-size: 10.8px;
    line-height: 4px;
    text-align: center;
    padding-left: 31px;
    color: #111;
}

.dock-btn{
    position: absolute;
    top: -4px;
    width: 14px;
    height: 14px;
    border-radius: 50%;
    background-color: #555;
    color: #fff;
    font-size: 12px;
    line-height: 14px;
    text-align: center;
}

.dock-close{
    left: -4px;
    font-weight: 700;
}

.dock-float{
    left: 16px;
    font-size: 9px;
}

.tabs{
    display: flex;
    justify-content: center;
    position: relative;
    height: 21px;
    padding-right: 9px;
    z-index: 1;
}

.tab{
    width: 65px;
    background-color: #fff;
    border: 1px solid #c6c6c6;
    border-left: none;
    border-radius: 0 5px 5px 0;
    font-size: 13.3px;
    line-height: 19px;
    text-align: center;
}

.tab-on{
    background: linear-gradient(#55a6f5, #1a7fe8);
    border: none;
    border-radius: 5px 0 0 5px;
    color: #e9f3ff;
    line-height: 21px;
}

.pane{
    flex: 1;
    min-height: 0;
    display: flex;
    flex-direction: column;
    margin-top: -11px;
    border-top: 1px solid #dcdcdc;
    border-right: 1px solid #e6e6e6;
    border-top-right-radius: 6px;
}

.pane-corner{
    width: 18px;
    height: 15px;
    flex: none;
    background-color: #dcdcdc;
}

.tree{
    flex: 1;
    min-height: 0;
    margin-right: 2px;
    border: 1px solid #a6a6a6;
    border-left: none;
}

.tree-head{
    height: 17px;
    padding-left: 1px;
    font-size: 10.8px;
    line-height: 16px;
}

.tree-head span{
    display: block;
    width: 239px;
    border-bottom: 1px solid #d3d3d3;
}

.tree-app{
    height: 14.5px;
    padding-left: 2px;
    font-size: 13px;
    line-height: 13px;
}

.node{
    display: flex;
    align-items: center;
    height: 18px;
    font-size: 12.8px;
}

.node svg{
    width: 16px;
    height: 16px;
    margin-left: 6px;
    overflow: visible;
}

.node span{
    margin-left: 6px;
}

.d1{ padding-left: 20px; }
.d2{ padding-left: 40px; }
.d3{ padding-left: 60px; }
.d4{ padding-left: 80px; }
.d5{ padding-left: 100px; }

.ar{
    width: 16px;
    height: 9px;
    display: flex;
    justify-content: center;
    align-items: center;
}

.ar.down::before{
    content: "";
    border-top: 8px solid #8a8a8a;
    border-left: 4.5px solid transparent;
    border-right: 4.5px solid transparent;
}

.ar.right::before{
    content: "";
    border-left: 7px solid #8a8a8a;
    border-top: 4.5px solid transparent;
    border-bottom: 4.5px solid transparent;
}

.dim{
    color: #3d3d3d;
}

.dim svg{
    opacity: .55;
}

.strong{
    color: #000;
}

.bold{
    font-weight: 700;
}

.split{
    flex: none;
    height: 7px;
    display: flex;
    justify-content: center;
    align-items: center;
    padding-right: 7px;
}

.split i{
    width: 6px;
    height: 6px;
    border-radius: 50%;
    background-color: #c9c9c9;
}

.props{
    flex: none;
    height: 50px;
    margin-right: 4px;
    border-top: 3px solid #cfcfcf;
    border-right: 1px solid #a6a6a6;
}

.props-head{
    display: flex;
    height: 18px;
    border-top: 1px solid #9a9a9a;
    border-bottom: 1px solid #d3d3d3;
    font-size: 10.8px;
    line-height: 17px;
}

.prop-col{
    width: 127px;
    padding-left: 4px;
    border-right: 1px solid #d3d3d3;
}

.val-col{
    padding-left: 4px;
}

/* DAG window */
.mdi{
    flex: 1;
    position: relative;
    overflow: hidden;
}

.dag-win{
    position: absolute;
    left: 777px;
    top: 31px;
    width: 491px;
    height: 900px;
    background-color: #fafbfd;
    box-shadow: 0 0 14px rgba(0, 50, 50, .28);
}

.dag-title{
    display: flex;
    align-items: center;
    gap: 7px;
    position: relative;
    height: 16px;
    padding-left: 6px;
    border-bottom: 1px solid #d3d3d3;
    font-size: 10.8px;
    color: #333;
}

.dag-title span{
    position: absolute;
    left: 0;
    right: 0;
    text-align: center;
}

.light{
    width: 11px;
    height: 11px;
    border-radius: 50%;
    background: radial-gradient(#c4c4c4 2.5px, #e2e2e2 3px);
    border: 1px solid #d4d4d4;
}

.dag-box{
    display: flex;
    margin: 12px 12px 0;
    width: 467px;
    height: 900px;
    border: 1px solid #aaa;
    border-top-color: #8c8c8c;
}

.graph{
    width: 190px;
    height: 843px;
    flex: none;
}

.edges path{
    fill: none;
    stroke: #111;
    stroke-opacity: .6;
    stroke-width: 1.8;
}

.dots circle{
    stroke: #333;
    stroke-width: 1;
}

.rows{
    padding-top: 9.5px;
}

.row{
    display: flex;
    align-items: center;
    height: 22px;
    font-size: 19.8px;
    white-space: nowrap;
}

.eye{
    width: 20px;
    height: 14px;
}

.off{
    opacity: .55;
}

.thumb{
    width: 20px;
    height: 20px;
    margin-left: 5px;
}

.ico{
    width: 21px;
    height: 21px;
    margin-left: 4px;
    overflow: visible;
}

.row span{
    margin: 1px 0 0 14px;
}

.cursor{
    fill: #000;
    stroke: #fff;
    stroke-width: 1.5;
}

/* colours shared by the nodes and their labels */
.row.red{ color: #f00; }
.row.maroon{ color: #800000; }
.row.lime{ color: #0f0; }
.row.green{ color: #008000; }
.row.blue{ color: #00f; }
.row.navy{ color: #000080; }
.row.cyan{ color: #0ff; }
.row.teal{ color: #008080; }
.row.magenta{ color: #f0f; }
.row.purple{ color: #800080; }
.row.olive{ color: #808000; }
.row.silver{ color: #a9a9a9; }
.row.gray{ color: #808080; }
.row.pale{ color: #d3d3d3; }

circle.red{ fill: #f00; }
circle.maroon{ fill: #800000; }
circle.lime{ fill: #0f0; }
circle.green{ fill: #008000; }
circle.blue{ fill: #00f; }
circle.navy{ fill: #000080; }
circle.cyan{ fill: #0ff; }
circle.teal{ fill: #008080; }
circle.magenta{ fill: #f0f; }
circle.purple{ fill: #800080; }
circle.olive{ fill: #808000; }
circle.silver{ fill: #a9a9a9; }
circle.gray{ fill: #808080; }
circle.pale{ fill: #d3d3d3; }
```
